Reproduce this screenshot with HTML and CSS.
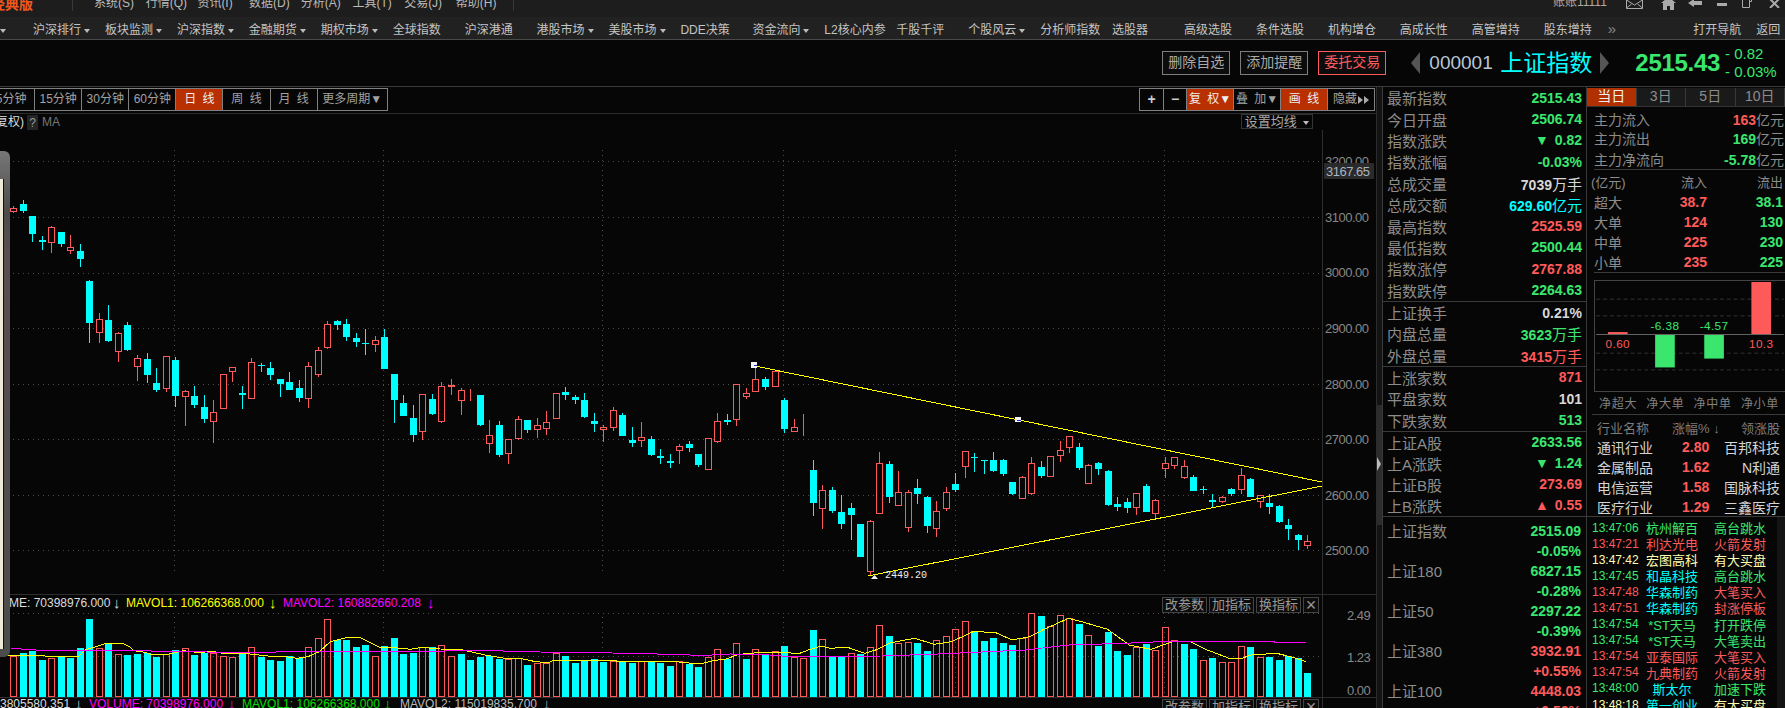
FILE: index.html
```html
<!DOCTYPE html>
<html lang="zh-CN">

<head>
    <meta charset="UTF-8">
    <title>上证指数 000001</title>
    <link rel="stylesheet" href="styles.css">
</head>

<body>
    <!-- 顶部菜单 -->
    <div class="menubar">
        <span class="brand">经典版</span>
        <ul class="menu">
            <li>系统(S)</li>
            <li>行情(Q)</li>
            <li>资讯(I)</li>
            <li>数据(D)</li>
            <li>分析(A)</li>
            <li>工具(T)</li>
            <li>交易(J)</li>
            <li>帮助(H)</li>
        </ul>
        <div class="win-tools">
            <span class="account">账账11111</span>
            <svg class="win-icon" width="17" height="9" viewBox="0 0 17 9"><path d="M.5-1h16v9.500H.5zM.5 0l8 5 8-5M.5 8l5-4M16.500 8l-5-4" fill="none" stroke="#aaa"/></svg>
            <svg class="win-icon" width="15" height="10" viewBox="0 0 15 10"><path d="M7.500-3L15 3h-2v7H9V6H6v4H2V3H0z" fill="#aaa"/></svg>
            <svg class="win-icon" width="14" height="8" viewBox="0 0 14 8"><path d="M0 3l6-4v2h8v4H6v2z" fill="#aaa"/></svg>
            <svg class="win-icon" width="10" height="8" viewBox="0 0 10 8"><rect y="3" width="10" height="3" fill="#aaa"/></svg>
            <svg class="win-icon" width="10" height="8" viewBox="0 0 10 8"><path d="M.5 0v7.500h7V0M8 1.500h1.500V-1" fill="none" stroke="#aaa"/></svg>
            <svg class="win-icon" width="11" height="8" viewBox="0 0 11 8"><path d="M1-1l9 9M10-1L1 8" stroke="#aaa" stroke-width="2"/></svg>
        </div>
    </div>

    <!-- 导航 -->
    <ul class="nav">
        <li class="nav-first"><i class="caret"></i></li>
        <li>沪深排行<i class="caret"></i></li>
        <li>板块监测<i class="caret"></i></li>
        <li>沪深指数<i class="caret"></i></li>
        <li>金融期货<i class="caret"></i></li>
        <li>期权市场<i class="caret"></i></li>
        <li>全球指数</li>
        <li>沪深港通</li>
        <li>港股市场<i class="caret"></i></li>
        <li>美股市场<i class="caret"></i></li>
        <li>DDE决策</li>
        <li>资金流向<i class="caret"></i></li>
        <li>L2核心内参</li>
        <li>千股千评</li>
        <li>个股风云<i class="caret"></i></li>
        <li>分析师指数</li>
        <li>选股器</li>
        <li>高级选股</li>
        <li>条件选股</li>
        <li>机构增仓</li>
        <li>高成长性</li>
        <li>高管增持</li>
        <li>股东增持</li>
        <li class="nav-more">»</li>
        <li class="nav-open">打开导航</li>
        <li class="nav-back">返回</li>
    </ul>

    <!-- 个股标题 -->
    <div class="quote">
        <a class="quote-btn" href="#">删除自选</a>
        <a class="quote-btn" href="#">添加提醒</a>
        <a class="quote-btn quote-btn-red" href="#">委托交易</a>
        <i class="arrow-left"></i>
        <span class="code">000001</span>
        <span class="name">上证指数</span>
        <i class="arrow-right"></i>
        <span class="price">2515.43</span>
        <div class="change">
            <span>- 0.82</span>
            <span>- 0.03%</span>
        </div>
    </div>

    <div class="main">
        <div class="chart-col">
            <div class="toolbar">
                <ul class="periods">
                    <li>5分钟</li>
                    <li>15分钟</li>
                    <li>30分钟</li>
                    <li>60分钟</li>
                    <li class="active">日 线</li>
                    <li>周 线</li>
                    <li>月 线</li>
                    <li class="wide">更多周期▼</li>
                </ul>
                <ul class="tools">
                    <li class="tool-sm">+</li>
                    <li class="tool-sm">−</li>
                    <li class="active">复 权▼</li>
                    <li>叠 加▼</li>
                    <li class="active">画 线</li>
                    <li>隐藏<i class="tri"></i><i class="tri"></i></li>
                </ul>
            </div>
            <div class="ma-row">
                <span class="ma-left"><b>复权)</b><i class="help">?</i><em>MA</em></span>
                <span class="ma-set">设置均线 <i class="caret"></i></span>
            </div>

            <div class="plot">
                <svg id="chart" class="plot-svg" width="1376" height="578" viewBox="0 130 1376 578">
                    <g id="grid"></g>
                    <g id="candles"></g>
                    <g id="volumes"></g>
                    <g id="lines"></g>

                    <text class="tick" x="1325" y="166">3200.00</text>
                    <text class="tick" x="1325" y="222">3100.00</text>
                    <text class="tick" x="1325" y="277">3000.00</text>
                    <text class="tick" x="1325" y="333">2900.00</text>
                    <text class="tick" x="1325" y="389">2800.00</text>
                    <text class="tick" x="1325" y="444">2700.00</text>
                    <text class="tick" x="1325" y="500">2600.00</text>
                    <text class="tick" x="1325" y="555">2500.00</text>
                    <rect x="1324" y="163" width="50" height="16" fill="#2a2a2a"/>
                    <text class="tick tick-now" x="1326" y="176">3167.65</text>

                    <text class="tick" x="1347" y="620">2.49</text>
                    <text class="tick" x="1347" y="662">1.23</text>
                    <text class="tick" x="1347" y="695">0.00</text>

                    <text class="low-label" x="885" y="578">2449.20</text>

                    <text class="legend" x="9" y="607" fill="#ddd">ME: 70398976.000</text>
                    <text class="legend-arrow" x="113" y="608" fill="#ddd">↓</text>
                    <text class="legend" x="126" y="607" fill="#ffff00">MAVOL1: 106266368.000</text>
                    <text class="legend-arrow" x="269" y="608" fill="#ffff00">↓</text>
                    <text class="legend" x="283" y="607" fill="#ff00ff">MAVOL2: 160882660.208</text>
                    <text class="legend-arrow" x="427" y="608" fill="#ff00ff">↓</text>

                    <text class="legend" x="0" y="708" fill="#ddd">3805580.351</text>
                    <text class="legend-arrow" x="75" y="709" fill="#ddd">↓</text>
                    <text class="legend" x="89" y="708" fill="#ff00ff">VOLUME: 70398976.000</text>
                    <text class="legend-arrow" x="228" y="709" fill="#ff00ff">↓</text>
                    <text class="legend" x="242" y="708" fill="#00e000">MAVOL1: 106266368.000</text>
                    <text class="legend-arrow" x="384" y="709" fill="#00e000">↓</text>
                    <text class="legend" x="400" y="708" fill="#bbb">MAVOL2: 115019835.700</text>
                    <text class="legend-arrow" x="543" y="709" fill="#bbb">↓</text>
                </svg>

                <!-- 被遮挡的浮动窗口 -->
                <div class="float-win"><div class="float-page"></div></div>

                <div class="pane-btns pane-btns-top">
                    <span>改参数</span><span>加指标</span><span>换指标</span><span class="pane-close">×</span>
                </div>
                <div class="pane-btns pane-btns-bottom">
                    <span>改参数</span><span>加指标</span><span>换指标</span><span class="pane-close">×</span>
                </div>
            </div>
        </div>

        <div class="scroll-strip">
            <div class="scroll-thumb"></div>
            <i class="scroll-grip"></i>
        </div>

        <!-- 指数数据 -->
        <div class="side-a">
            <div class="stat-group group-main">
                <div class="stat"><span>最新指数</span><b class="down">2515.43</b></div>
                <div class="stat"><span>今日开盘</span><b class="down">2506.74</b></div>
                <div class="stat"><span>指数涨跌</span><b class="down">▼ 0.82</b></div>
                <div class="stat"><span>指数涨幅</span><b class="down">-0.03%</b></div>
                <div class="stat"><span>总成交量</span><b class="white">7039<em>万手</em></b></div>
                <div class="stat"><span>总成交额</span><b class="cyan">629.60<em>亿元</em></b></div>
                <div class="stat"><span>最高指数</span><b class="up">2525.59</b></div>
                <div class="stat"><span>最低指数</span><b class="down">2500.44</b></div>
                <div class="stat"><span>指数涨停</span><b class="up">2767.88</b></div>
                <div class="stat"><span>指数跌停</span><b class="down">2264.63</b></div>
            </div>
            <div class="stat-group group-three">
                <div class="stat"><span>上证换手</span><b class="white">0.21%</b></div>
                <div class="stat"><span>内盘总量</span><b class="down">3623<em>万手</em></b></div>
                <div class="stat"><span>外盘总量</span><b class="up">3415<em>万手</em></b></div>
            </div>
            <div class="stat-group group-three">
                <div class="stat"><span>上涨家数</span><b class="up">871</b></div>
                <div class="stat"><span>平盘家数</span><b class="white">101</b></div>
                <div class="stat"><span>下跌家数</span><b class="down">513</b></div>
            </div>
            <div class="stat-group group-four">
                <div class="stat"><span>上证A股</span><b class="down">2633.56</b></div>
                <div class="stat"><span>上A涨跌</span><b class="down">▼ 1.24</b></div>
                <div class="stat"><span>上证B股</span><b class="up">273.69</b></div>
                <div class="stat"><span>上B涨跌</span><b class="up">▲ 0.55</b></div>
            </div>
            <div class="index-list">
                <div class="stat"><span>上证指数</span><b class="down">2515.09</b></div>
                <div class="stat"><span></span><b class="down">-0.05%</b></div>
                <div class="stat"><span>上证180</span><b class="down">6827.15</b></div>
                <div class="stat"><span></span><b class="down">-0.28%</b></div>
                <div class="stat"><span>上证50</span><b class="down">2297.22</b></div>
                <div class="stat"><span></span><b class="down">-0.39%</b></div>
                <div class="stat"><span>上证380</span><b class="up">3932.91</b></div>
                <div class="stat"><span></span><b class="up">+0.55%</b></div>
                <div class="stat"><span>上证100</span><b class="up">4448.03</b></div>
                <div class="stat"><span></span><b class="up">+0.50%</b></div>
            </div>
        </div>

        <!-- 资金流向 -->
        <div class="side-b">
            <ul class="day-tabs">
                <li class="active">当日</li>
                <li>3日</li>
                <li>5日</li>
                <li>10日</li>
            </ul>
            <div class="flow-sum">
                <div class="flow-row"><span>主力流入</span><b class="up">163<em>亿元</em></b></div>
                <div class="flow-row"><span>主力流出</span><b class="down">169<em>亿元</em></b></div>
                <div class="flow-row flow-net"><span>主力净流向</span><b class="down">-5.78<em>亿元</em></b></div>
            </div>
            <div class="flow-table">
                <div class="flow-head"><span>(亿元)</span><span>流入</span><span>流出</span></div>
                <div class="flow-line"><span>超大</span><b class="up">38.7</b><b class="down">38.1</b></div>
                <div class="flow-line"><span>大单</span><b class="up">124</b><b class="down">130</b></div>
                <div class="flow-line"><span>中单</span><b class="up">225</b><b class="down">230</b></div>
                <div class="flow-line"><span>小单</span><b class="up">235</b><b class="down">225</b></div>
            </div>
            <div class="net-chart">
                <svg width="191" height="112" viewBox="0 0 191 112">
                    <path d="M0 18.500H191M0 35.500H191M0 73.500H191M0 90.500H191" stroke="#333" stroke-dasharray="4 3"/>
                    <path d="M0 54.500H191" stroke="#666"/>
                    <rect x="12" y="52" width="20" height="2" fill="#ff5a5a"/>
                    <rect x="60" y="55" width="20" height="33" fill="#3be66f"/>
                    <rect x="110" y="55" width="20" height="24" fill="#3be66f"/>
                    <rect x="158" y="1" width="20" height="53" fill="#ff5a5a"/>
                    <text class="net-num" x="22" y="68" fill="#ff5a5a">0.60</text>
                    <text class="net-num" x="70" y="50" fill="#3be66f">-6.38</text>
                    <text class="net-num" x="120" y="50" fill="#3be66f">-4.57</text>
                    <text class="net-num" x="168" y="68" fill="#ff5a5a">10.3</text>
                </svg>
            </div>
            <div class="net-labels"><span>净超大</span><span>净大单</span><span>净中单</span><span>净小单</span></div>
            <div class="sector">
                <div class="sector-head"><span>行业名称</span><span>涨幅% ↓</span><span>领涨股</span></div>
                <div class="sector-row"><span>通讯行业</span><b class="up">2.80</b><span>百邦科技</span></div>
                <div class="sector-row"><span>金属制品</span><b class="up">1.62</b><span>N利通</span></div>
                <div class="sector-row"><span>电信运营</span><b class="up">1.58</b><span>国脉科技</span></div>
                <div class="sector-row"><span>医疗行业</span><b class="up">1.29</b><span>三鑫医疗</span></div>
            </div>
            <div class="ticker-wrap">
                <div class="ticker">
                    <div class="tick-row down"><span>13:47:06</span><span>杭州解百</span><span>高台跳水</span></div>
                    <div class="tick-row up"><span>13:47:21</span><span>利达光电</span><span>火箭发射</span></div>
                    <div class="tick-row pale"><span>13:47:42</span><span>宏图高科</span><span>有大买盘</span></div>
                    <div class="tick-row down"><span>13:47:45</span><span class="cyan">和晶科技</span><span>高台跳水</span></div>
                    <div class="tick-row up"><span>13:47:48</span><span class="cyan">华森制药</span><span>大笔买入</span></div>
                    <div class="tick-row up"><span>13:47:51</span><span class="cyan">华森制药</span><span>封涨停板</span></div>
                    <div class="tick-row down"><span>13:47:54</span><span>*ST天马</span><span>打开跌停</span></div>
                    <div class="tick-row down"><span>13:47:54</span><span>*ST天马</span><span>大笔卖出</span></div>
                    <div class="tick-row up"><span>13:47:54</span><span>亚泰国际</span><span>大笔买入</span></div>
                    <div class="tick-row up"><span>13:47:54</span><span>九典制药</span><span>火箭发射</span></div>
                    <div class="tick-row down"><span>13:48:00</span><span class="cyan">斯太尔</span><span>加速下跌</span></div>
                    <div class="tick-row pale"><span>13:48:18</span><span class="cyan">第一创业</span><span>有大买盘</span></div>
                </div>
                <div class="ticker-bar"></div>
            </div>
        </div>
    </div>
    <script src="chart.js"></script>
</body>

</html>
```

FILE: styles.css
```css
* {
    margin: 0;
    padding: 0;
    box-sizing: border-box;
}

html,
body {
    width: 1785px;
    height: 708px;
    overflow: hidden;
}

body {
    position: relative;
    background-color: #060606;
    color: #8c8c8c;
    font-family: "Liberation Sans", "Noto Sans CJK SC", sans-serif;
    font-size: 12px;
}

ul {
    list-style: none;
}

a {
    text-decoration: none;
}

i,
em {
    font-style: normal;
}

.up {
    color: #ff5a5a;
}

.down {
    color: #3be66f;
}

.cyan {
    color: #00ffff;
}

.white {
    color: #d8d8d8;
}

.pale {
    color: #ffffb0;
}

.caret {
    display: inline-block;
    margin-left: 3px;
    border-top: 4px solid #bbb;
    border-left: 3px solid transparent;
    border-right: 3px solid transparent;
    vertical-align: middle;
}

/* 顶部菜单 */
.menubar {
    display: flex;
    height: 17px;
    overflow: hidden;
    background-color: #1d1d1d;
    line-height: 18px;
}

.brand {
    flex: none;
    width: 81px;
    height: 17px;
    margin-left: -9px;
    margin-top: -5px;
    color: #f0581e;
    font-size: 14px;
    font-weight: bold;
}

.menu {
    display: flex;
    flex: none;
    width: 442px;
    height: 11px;
    padding-left: 21px;
    border-left: 1px solid #383838;
    border-right: 1px solid #383838;
    color: #bbb;
}

.menu li {
    flex: none;
    width: 51.700px;
    margin-top: -6px;
}

.win-tools {
    display: flex;
    align-items: flex-start;
    margin-left: auto;
    padding-right: 5px;
}

.account {
    width: 73px;
    margin-top: -7px;
    color: #aaa;
}

.win-icon:nth-of-type(2) {
    margin-left: 18px;
}

.win-icon:nth-of-type(3) {
    margin-left: 12px;
}

.win-icon:nth-of-type(4),
.win-icon:nth-of-type(5) {
    margin-left: 15px;
}

.win-icon:nth-of-type(6) {
    margin-left: 17px;
}

/* 导航 */
.nav {
    display: flex;
    height: 23px;
    overflow: hidden;
    background-color: #212121;
    border-bottom: 1px solid #4a4a4a;
    color: #c4c4c4;
    line-height: 27px;
    white-space: nowrap;
}

.nav li {
    flex: none;
    width: 71.950px;
}

.nav .nav-first {
    width: 72px;
    margin-left: -39px;
    padding-left: 36px;
}

.nav .nav-more {
    width: 85.600px;
    margin-left: -8px;
    color: #888;
    font-size: 15px;
    line-height: 24px;
}

.nav .nav-open {
    width: 63px;
}

.nav .nav-back {
    width: 40px;
}

/* 个股标题 */
.quote {
    display: flex;
    align-items: center;
    justify-content: flex-end;
    height: 47px;
    padding-right: 8px;
    border-bottom: 1px solid #3a3a3a;
}

.quote-btn {
    width: 68px;
    height: 24px;
    margin-right: 10px;
    border: 1px solid #7d7d7d;
    color: #aaa;
    font-size: 14px;
    line-height: 21px;
    text-align: center;
    background-color: #0c0c0c;
}

.quote-btn-red {
    margin-right: 25px;
    border-color: #ff5a5a;
    color: #ff5a5a;
}

.arrow-left,
.arrow-right {
    width: 0;
    height: 0;
    border-top: 11px solid transparent;
    border-bottom: 11px solid transparent;
}

.arrow-left {
    border-right: 9px solid #555;
}

.arrow-right {
    margin-left: 8px;
    border-left: 9px solid #555;
}

.code {
    width: 60px;
    margin-left: 9px;
    color: #b9c6d6;
    font-size: 19px;
}

.name {
    margin-left: 11px;
    color: #00ffff;
    font-size: 23px;
    line-height: 30px;
}

.price {
    margin-left: 26px;
    color: #3be66f;
    font-size: 24px;
    font-weight: bold;
    letter-spacing: -.3px;
    line-height: 34px;
}

.change {
    display: flex;
    flex-direction: column;
    width: 52px;
    margin-left: 5px;
    color: #3be66f;
    font-size: 15px;
    line-height: 18px;
}

/* 主体 */
.main {
    display: flex;
    height: 621px;
}

.chart-col {
    flex: none;
    width: 1376px;
}

.toolbar {
    display: flex;
    justify-content: space-between;
    height: 27px;
    padding-top: 1px;
    border-bottom: 1px solid #2c2c2c;
}

.periods,
.tools {
    display: flex;
    height: 23px;
    border: 1px solid #808080;
    color: #a2a2a2;
    font-size: 12px;
    word-spacing: 3px;
    line-height: 21px;
    text-align: center;
    white-space: nowrap;
}

.periods {
    margin-left: -13px;
}

.periods li {
    width: 47.100px;
    border-right: 1px solid #808080;
}

.periods .wide {
    width: 69px;
    border-right: 0;
}

.periods .active,
.tools .active {
    background-color: #b83000;
    color: #eee;
}

.tools {
    margin-right: 1px;
}

.tools li {
    width: 47px;
    border-left: 1px solid #808080;
}

.tools li:first-child {
    border-left: 0;
}

.tools .tool-sm {
    width: 23px;
    color: #ccc;
    font-size: 14px;
    font-weight: bold;
}

.tri {
    display: inline-block;
    margin-left: 1px;
    border-left: 5px solid #aaa;
    border-top: 4px solid transparent;
    border-bottom: 4px solid transparent;
    vertical-align: middle;
}

.ma-row {
    display: flex;
    justify-content: space-between;
    height: 16px;
    padding-right: 63px;
    line-height: 16px;
}

.ma-left {
    display: flex;
    align-items: center;
    margin-left: -4px;
}

.ma-left b {
    color: #ddd;
    font-weight: normal;
}

.help {
    width: 11px;
    height: 15px;
    margin-left: 3px;
    background-color: #242424;
    color: #999;
    text-align: center;
}

.ma-left em {
    margin-left: 4px;
    color: #777;
}

.ma-set {
    width: 72px;
    height: 15px;
    border: 1px solid #333;
    color: #aaa;
    font-size: 13px;
    line-height: 14px;
    text-align: center;
}

/* 图表 */
.plot {
    position: relative;
    height: 578px;
    overflow: hidden;
}

.plot-svg {
    display: block;
}

.tick {
    fill: #868686;
    font-size: 13px;
    letter-spacing: -.5px;
}

.tick-now {
    fill: #a9b4bf;
}

.low-label {
    fill: #eee;
    font-family: "Liberation Mono", monospace;
    font-size: 10px;
}

.legend {
    font-size: 12px;
}

.legend-arrow {
    font-size: 15px;
}

.float-win {
    position: absolute;
    left: 0;
    top: 21px;
    width: 10px;
    height: 506px;
    border-radius: 0 6px 6px 0;
    background: linear-gradient(#777, #4c4c4c 12%, #5a4e50 20%, #4c4c4c);
}

.float-page {
    position: absolute;
    left: 0;
    top: 28px;
    width: 4px;
    height: 470px;
    background-color: #efead8;
    border-right: 1px solid #111;
}

.pane-btns {
    position: absolute;
    left: 1162px;
    display: flex;
    gap: 2px;
    color: #999;
    font-size: 13px;
    text-align: center;
}

.pane-btns span {
    width: 45px;
    height: 16px;
    border: 1px solid #444;
    line-height: 14px;
    background-color: #0c0c0c;
}

.pane-btns .pane-close {
    width: 16px;
    font-size: 18px;
}

.pane-btns-top {
    top: 467px;
}

.pane-btns-bottom {
    top: 569px;
}

/* 滚动条 */
.scroll-strip {
    position: relative;
    flex: none;
    width: 6px;
    background-color: #131313;
    border-left: 1px solid #2c2c2c;
}

.scroll-thumb {
    margin-top: 318px;
    height: 120px;
    background-color: #2c2c2c;
}

.scroll-grip {
    position: absolute;
    top: 370px;
    left: 0;
    border-left: 4px solid #bbb;
    border-top: 7px solid transparent;
    border-bottom: 7px solid transparent;
}

/* 指数数据 */
.side-a {
    flex: none;
    width: 205px;
    border-left: 1px solid #3a3a3a;
    border-right: 1px solid #3a3a3a;
    overflow: hidden;
}

.stat-group {
    border-bottom: 1px solid #3a3a3a;
}

.stat {
    display: flex;
    justify-content: space-between;
    align-items: center;
    padding: 0 4px 0 4px;
    font-size: 15px;
}

.stat b {
    font-size: 14px;
    word-spacing: 2px;
}

.stat em {
    font-size: 15px;
    font-weight: normal;
}

.group-main .stat {
    height: 21.400px;
}

.group-three .stat {
    height: 21.300px;
}

.group-four .stat {
    height: 21px;
}

.index-list {
    padding-top: 4px;
}

.index-list .stat {
    height: 20px;
    padding-right: 5px;
}

/* 资金流向 */
.side-b {
    flex: none;
    width: 198px;
    overflow: hidden;
}

.day-tabs {
    display: flex;
    height: 19px;
    margin-top: 1px;
    background-color: #1a1a1a;
    border-bottom: 1px solid #333;
    font-size: 14px;
    line-height: 17px;
    text-align: center;
}

.day-tabs li {
    width: 51px;
    border-right: 1px solid #3a3a3a;
}

.day-tabs .active {
    background-color: #b03000;
    color: #eee;
}

.flow-sum {
    height: 63px;
    margin-left: 7px;
    padding-top: 2px;
    border-bottom: 1px solid #3a3a3a;
}

.flow-row {
    display: flex;
    justify-content: space-between;
    align-items: center;
    height: 19px;
    padding-right: 1px;
    font-size: 14px;
}

.flow-row b {
    font-size: 14px;
}

.flow-row em {
    color: #8c8c8c;
    font-size: 14px;
    font-weight: normal;
}

.flow-net {
    margin-top: 2px;
}

.flow-table {
    height: 103px;
    margin-left: 7px;
    padding-top: 1px;
    border-bottom: 1px solid #3a3a3a;
    font-size: 14px;
}

.flow-head,
.flow-line {
    display: grid;
    grid-template-columns: 40px 73px 76px;
    align-items: center;
    text-align: right;
}

.flow-head {
    height: 20px;
    font-size: 13px;
}

.flow-line {
    height: 20px;
}

.flow-head span:first-child,
.flow-line span:first-child {
    text-align: left;
}

.flow-head span:first-child {
    margin-left: -3px;
}

.flow-line:nth-child(2) {
    margin-top: 1px;
}

.net-chart {
    height: 112px;
    margin: 7px 0 0 7px;
}

.net-chart svg {
    display: block;
    border-left: 1px solid #444;
    border-top: 1px solid #444;
    border-bottom: 1px solid #444;
}

.net-num {
    font-size: 12px;
    letter-spacing: .4px;
    text-anchor: middle;
}

.net-labels {
    display: flex;
    justify-content: space-between;
    height: 23px;
    margin-left: 5px;
    padding: 2px 6px 0 7px;
    border-bottom: 1px solid #3a3a3a;
    color: #808080;
    font-size: 12px;
    letter-spacing: .7px;
    line-height: 21px;
}

.sector {
    height: 102px;
    padding: 2px 5px 0 10px;
    border-bottom: 1px solid #3a3a3a;
}

.sector-head,
.sector-row {
    display: grid;
    grid-template-columns: 75px 1fr auto;
    align-items: center;
    height: 20px;
    white-space: nowrap;
}

.sector-head {
    color: #7c7c7c;
    font-size: 13px;
}

.sector-row {
    color: #d4d4d4;
    font-size: 14px;
}

.sector-row b {
    padding-left: 10px;
    font-size: 14px;
}

.ticker-wrap {
    display: flex;
    height: 200px;
}

.ticker {
    flex: 1;
    padding: 1px 0 0 5px;
}

.tick-row {
    display: grid;
    grid-template-columns: 46px 52px auto;
    column-gap: 8px;
    align-items: center;
    height: 16.100px;
    font-size: 13px;
    white-space: nowrap;
}

.tick-row span:first-child {
    font-size: 12px;
}

.tick-row span:nth-child(2) {
    text-align: center;
}

.tick-row span:last-child {
    margin-left: 8px;
}

.ticker-bar {
    flex: none;
    width: 8px;
    background-color: #141414;
}
```

FILE: chart.js
```js
// K线、成交量都按屏幕坐标画，x 由序号算出
var SVG_NS = 'http://www.w3.org/2000/svg';
var CYAN = '#00ffff';
var RED = '#ff5a5a';
var BG = '#060606';

function candleX(i) {
    return Math.round(13.3 + 9.515 * i);
}

function add(parent, tag, attrs) {
    var el = document.createElementNS(SVG_NS, tag);
    for (var k in attrs) {
        el.setAttribute(k, attrs[k]);
    }
    parent.appendChild(el);
    return el;
}

// 每段：[y 偏移, [颜色, 影线上, 影线下, 实体上, 实体下]...]，纵坐标按 3 倍记录
var segments = [
    [130, [
        ['r',228,250,235,245],['c',210,248,222,243],['c',258,335,258,311],['c',318,360,329,335],
        ['r',288,368,292,338],['c',306,350,306,342],['r',315,371,352,362],['c',342,410,363,386],
        ['c',450,638,453,578],['r',549,638,566,610],['c',525,635,570,632],['r',607,695,610,667],
        ['c',576,662,585,659],['r',675,752,685,710],['c',669,760,687,734],['c',714,785,759,779],
        ['r',679,785,679,776],['c',682,831,690,797],['r',781,887,782,802],['c',768,833,798,824],
        ['c',795,878,831,866],['r',810,938,847,875],['r',733,838,733,838],['r',712,755,712,727],
        ['c',768,836,789,794],['r',685,808,697,808],['c',700,725,705,708],['c',696,749,714,734],
        ['c',747,800,747,761],['c',726,779,756,779],['c',750,815,774,803],['r',697,833,709,808],
        ['r',651,740,661,734],['r',574,656,583,655],['c',570,599,573,584],['c',568,633,582,620],
        ['c',609,650,624,635],['c',597,674,639,641],['r',618,665,631,646],['c',597,717,621,716],
        ['c',732,878,732,809],['c',795,858,819,857],['c',825,935,864,914],['r',793,929,793,907],
        ['c',792,854,807,851],['r',757,880,769,877]
    ]],
    [300, [
        ['r',237,285,256,262],['r',265,345,271,302],['r',267,303,280,282],['c',285,378,285,375],
        ['r',360,459,405,431],['c',364,470,375,465],['r',418,492,418,461],['r',348,420,358,416],
        ['c',360,398,360,390],['r',354,414,376,391],['r',333,405,367,388],['r',280,356,280,356],
        ['c',262,300,276,285],['c',285,312,291,300],['c',280,354,300,351],['c',339,396,363,372],
        ['r',376,426,382,389],['r',321,393,331,383],['c',339,408,345,408],['c',381,441,420,429],
        ['r',366,441,412,422],['c',408,468,417,465],['c',447,492,468,474],['c',462,504,483,489],
        ['r',432,492,439,452],['c',423,456,432,444],['c',462,501,462,495],['r',415,509,415,509],
        ['r',339,428,364,425],['c',342,375,360,366],['r',253,378,253,359],['r',264,297,280,290],
        ['r',200,276,238,275],['c',231,270,237,261],['r',213,261,213,261],['c',295,399,300,387],
        ['r',357,396,382,395],['r',342,408,373,376],['c',480,648,510,609],['r',555,687,571,626],
        ['c',561,639,570,633],['c',585,687,636,672],['c',609,720,624,645],['c',672,771,672,771],
        ['r',660,828,664,815],['r',456,641,490,641],['c',483,609,492,591],['r',513,618,577,617]
    ]],
    [380, [
        ['r',330,456,337,443],['c',297,372,324,342],['c',348,459,351,438],['r',363,471,394,446],
        ['r',321,393,337,388],['c',279,336,312,330],['r',213,294,214,260],['c',219,276,231,234],
        ['c',240,282,240,242],['c',216,276,240,273],['c',237,288,240,283],['c',306,345,306,342],
        ['r',289,356,292,356],['r',231,345,250,342],['c',243,294,261,288],['r',229,290,229,290],
        ['r',183,246,211,227],['r',168,219,168,205],['c',189,270,201,264],['r',252,311,256,311],
        ['c',246,285,249,267],['c',270,378,273,375],['c',351,393,372,381],['c',354,399,366,384],
        ['r',339,405,340,383],['c',312,396,318,396],['r',358,417,361,401],['r',231,294,250,266],
        ['r',232,267,232,257],['r',240,297,259,293],['c',285,333,291,333],['c',318,342,327,330],
        ['c',342,381,360,366],['r',349,369,352,365],['c',324,348,327,342],['r',264,342,286,331],
        ['c',294,351,297,351],['r',345,384,346,365],['c',342,402,369,381],['c',375,429,378,426],
        ['c',417,480,435,447],['c',462,510,465,480],['r',465,507,484,499]
    ]]
];

// 成交量柱顶端，序号与 K 线一一对应，r 为空心红柱
var volumes = [
    'r198','c190','c183','c210','r205','c200','c203','c175','c87','r173','c162','r193','c195','c192','c190','c201',
    'r193','c180','r175','c195','c188','r188','r198','r202','c193','r172','c200','c210','c213','c198','c205','r172',
    'r145','r87','c150','c150','c170','c165','r198','c168','c145','c192','c188','r170','c170','r165','r198','c192',
    'c210','c200','c198','c206','r208','r205','c225','r220','r220','r188','c198','c218','c212','c208','c215','r212',
    'c212','c218','r212','c215','c218','c228','r212','c222','c230','r202','r178','c207','r160','c207','r178','c192',
    'r184','c168','r202','r204','c120','r148','c200','c200','r190','c192','r172','r105','c138','r158','r156','c159',
    'c183','r150','r138','r118','r93','c123','c153','c144','c159','c165','r144','r70','c78','r108','r75','r85',
    'c102','r135','c168','c125','c183','c195','r172','c162','r180','r112','r150','c162','c177','r210','c204','r216',
    'r216','r168','c171','r202','c200','c210','c198','c204','c249'
];

var yellowA = [[0,195],[25,197],[80,197],[150,200],[175,200],[190,180],[210,172],[235,161],[275,160],[290,170],[300,182],[320,186],[345,195],[380,192],[410,182],[440,187],[480,185],[500,190],[560,192],[600,198],[640,200],[665,205],[690,200],[715,185],[740,155],[780,142],[805,142],[825,155],[850,172],[890,174],[920,178],[945,172],[985,177],[1030,178],[1060,187],[1090,196],[1130,205],[1165,205],[1200,215],[1230,218],[1240,210],[1290,210],[1340,212],[1420,214],[1470,215],[1520,216],[1568,222]];
var yellowB = [[0,222],[30,212],[60,207],[85,195],[110,190],[160,187],[230,190],[250,180],[280,168],[300,175],[340,172],[380,190],[405,180],[440,158],[495,145],[540,163],[580,155],[630,125],[680,127],[720,150],[760,140],[790,120],[850,85],[880,95],[940,118],[990,165],[1040,178],[1090,155],[1130,155],[1170,180],[1220,205],[1250,205],[1270,195],[1330,190],[1375,205],[1398,215]];
var pinkA = [[25,175],[80,180],[145,182],[300,182],[500,187],[900,184],[1100,182],[1210,186],[1420,190],[1568,196]];
var pinkB = [[0,197],[70,192],[160,195],[210,200],[420,198],[550,192],[750,180],[850,165],[980,160],[1060,155],[1325,155],[1325,157],[1398,157]];

function drawGrid() {
    var g = document.getElementById('grid');
    var dots = { stroke: '#4c4c4c', 'stroke-dasharray': '1 4', 'shape-rendering': 'crispEdges' };
    [161.5, 217.5, 273.5, 328.5, 384.5, 439.5, 495.5, 550.5, 613.5, 656.5].forEach(function (y) {
        add(g, 'line', Object.assign({ x1: 13, x2: 1322, y1: y, y2: y }, dots));
    });
    [174.5, 383.5, 602.5, 783.5, 955.5, 1164.5].forEach(function (x) {
        add(g, 'line', Object.assign({ x1: x, x2: x, y1: 150, y2: 575 }, dots));
        add(g, 'line', Object.assign({ x1: x, x2: x, y1: 617, y2: 696 }, dots));
    });
    var frame = { stroke: '#2e2e2e', 'shape-rendering': 'crispEdges' };
    add(g, 'line', Object.assign({ x1: 1322.5, x2: 1322.5, y1: 130, y2: 708 }, frame));
    add(g, 'line', Object.assign({ x1: 0, x2: 1376, y1: 594.5, y2: 594.5 }, frame));
    add(g, 'line', Object.assign({ x1: 0, x2: 1376, y1: 697.5, y2: 697.5 }, frame));
}

function drawCandles() {
    var g = document.getElementById('candles');
    var i = 0;
    segments.forEach(function (seg) {
        var base = seg[0];
        seg[1].forEach(function (c) {
            var x = candleX(i++);
            var hi = Math.round(base + c[1] / 3);
            var lo = Math.round(base + c[2] / 3);
            var top = Math.round(base + c[3] / 3);
            var bottom = Math.round(base + c[4] / 3);
            var color = c[0] === 'c' ? CYAN : RED;
            add(g, 'rect', { x: x, y: hi, width: 1, height: Math.max(lo - hi, 1), fill: color });
            if (c[0] === 'c') {
                add(g, 'rect', { x: x - 3, y: top, width: 7, height: Math.max(bottom - top, 1), fill: color });
            } else {
                add(g, 'rect', { x: x - 2.5, y: top + .5, width: 6, height: Math.max(bottom - top - 1, 0), fill: BG, stroke: color });
            }
        });
    });
}

function drawVolumes() {
    var g = document.getElementById('volumes');
    volumes.forEach(function (v, i) {
        var x = candleX(i);
        var top = Math.round(590 + Number(v.slice(1)) / 3);
        if (v[0] === 'c') {
            add(g, 'rect', { x: x - 3, y: top, width: 7, height: 697 - top, fill: CYAN });
        } else {
            add(g, 'rect', { x: x - 2.5, y: top + .5, width: 6, height: 696 - top, fill: 'none', stroke: RED });
        }
    });
}

function polyline(g, points, scale, offset, color) {
    var str = points.map(function (p) {
        return (offset + p[0] / scale).toFixed(1) + ',' + (590 + p[1] / 3).toFixed(1);
    }).join(' ');
    add(g, 'polyline', { points: str, fill: 'none', stroke: color, 'shape-rendering': 'crispEdges' });
}

function drawLines() {
    var g = document.getElementById('lines');
    polyline(g, yellowA, 2.24, 0, '#ffff00');
    polyline(g, yellowB, 2.306, 700, '#ffff00');
    polyline(g, pinkA, 2.24, 0, '#ff00ff');
    polyline(g, pinkB, 2.306, 700, '#ff00ff');

    // 手工画的趋势线
    var trend = { stroke: '#ffff00', 'shape-rendering': 'crispEdges' };
    add(g, 'line', Object.assign({ x1: 755, y1: 366, x2: 1322, y2: 482 }, trend));
    add(g, 'line', Object.assign({ x1: 868, y1: 576, x2: 1322, y2: 486 }, trend));
    add(g, 'rect', { x: 751, y: 362, width: 6, height: 6, fill: '#f4f4f4' });
    add(g, 'rect', { x: 754, y: 365, width: 3, height: 1, fill: '#2030c0' });
    add(g, 'rect', { x: 1015, y: 417, width: 6, height: 5, fill: '#f4f4f4' });
    add(g, 'rect', { x: 1017, y: 420, width: 4, height: 1, fill: '#2030c0' });
    add(g, 'path', { d: 'M871 579h7l-3.500-4z', fill: '#f4f4f4' });
}

drawGrid();
drawCandles();
drawVolumes();
drawLines();
```
